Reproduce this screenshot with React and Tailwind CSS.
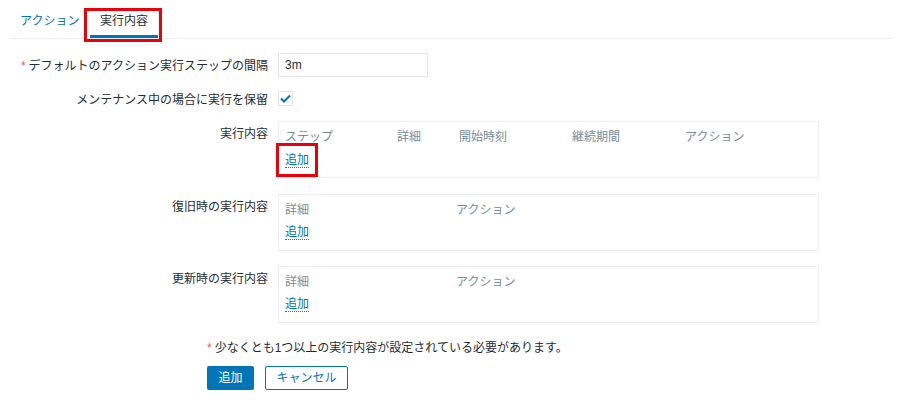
import React from 'react';

const FONT = { fontFamily: 'Arial, "Liberation Sans", "Noto Sans CJK JP", sans-serif' };

const Link = ({ children }) => (
    <span className="text-[#0275b8] border-b border-dotted border-[#0275b8] leading-[15px] cursor-pointer">{children}</span>
);

const OpsTable = ({ cols, boxed }) => (
    <div className="border border-[#ebeef0] w-[541px] h-[57px] px-[6px] pt-[4px] bg-white">
        <div className="flex text-[#768d99] h-[21px] items-center">
            {cols.map(([label, w]) => (
                <div key={label} style={{ width: w }}>{label}</div>
            ))}
        </div>
        <div className="mt-[3px]">
            {boxed ? (
                <span className="inline-block -ml-[9px] -mt-[7px] pl-[6px] pr-[6px] pt-[5px] pb-[5px] border-[3px] border-[#e8000b]">
                    <Link>追加</Link>
                </span>
            ) : (
                <Link>追加</Link>
            )}
        </div>
    </div>
);

const Row = ({ label, required, children, className = '' }) => (
    <div className={`grid grid-cols-[268px_1fr] gap-[10px] ${className}`}>
        <div className="text-right text-[#1f2c33] pt-[4px]">
            {required && <span className="text-[#e45959] mr-[3px]">*</span>}
            {label}
        </div>
        <div>{children}</div>
    </div>
);

export default function App() {
    return (
        <div className="w-[903px] h-[411px] bg-white text-[12px] text-[#1f2c33] overflow-hidden" style={FONT}>
            {/* Tabs */}
            <div className="mx-[10px] h-[39px] border-b border-[#ebeef0] flex items-end">
                <div className="w-[80px] pl-[10px] pb-[8px] text-[#0275b8]">アクション</div>
                <div className="relative w-[68px] h-[30px] flex flex-col items-center justify-between">
                    <div className="pt-[4px] text-[#1f2c33]">実行内容</div>
                    <div className="w-full h-[3px] bg-[#0275b8]" />
                    <div className="absolute -left-[6px] -right-[4px] top-0 -bottom-[4px] border-[3px] border-[#e8000b]" />
                </div>
            </div>

            {/* Form */}
            <div className="pt-[14px]">
                <Row label="デフォルトのアクション実行ステップの間隔" required>
                    <div className="w-[150px] h-[24px] border border-[#dfe4e7] px-[6px] flex items-center">3m</div>
                </Row>
                <Row label="メンテナンス中の場合に実行を保留" className="mt-[10px]">
                    <div className="w-[15px] h-[15px] border border-[#dfe4e7] mt-[4px] flex items-center justify-center">
                        <svg width="11" height="9" viewBox="0 0 11 9" fill="none">
                            <path d="M1 4.5 L4 7.5 L10 1.5" stroke="#0275b8" strokeWidth="2" />
                        </svg>
                    </div>
                </Row>
                <Row label="実行内容" className="mt-[12px]">
                    <OpsTable boxed cols={[['ステップ', 112], ['詳細', 62], ['開始時刻', 113], ['継続期間', 113], ['アクション', 120]]} />
                </Row>
                <Row label="復旧時の実行内容" className="mt-[16px]">
                    <OpsTable cols={[['詳細', 171], ['アクション', 120]]} />
                </Row>
                <Row label="更新時の実行内容" className="mt-[15px]">
                    <OpsTable cols={[['詳細', 171], ['アクション', 120]]} />
                </Row>
                <div className="pl-[207px] mt-[16px]">
                    <span className="text-[#e45959] mr-[3px]">*</span>
                    少なくとも1つ以上の実行内容が設定されている必要があります。
                </div>
                <div className="pl-[207px] mt-[9px] flex gap-[11px]">
                    <button className="h-[24px] w-[47px] bg-[#0275b8] text-white rounded-[2px]">追加</button>
                    <button className="h-[24px] w-[83px] border border-[#0275b8] text-[#0275b8] bg-white rounded-[2px]">キャンセル</button>
                </div>
            </div>
        </div>
    );
}
